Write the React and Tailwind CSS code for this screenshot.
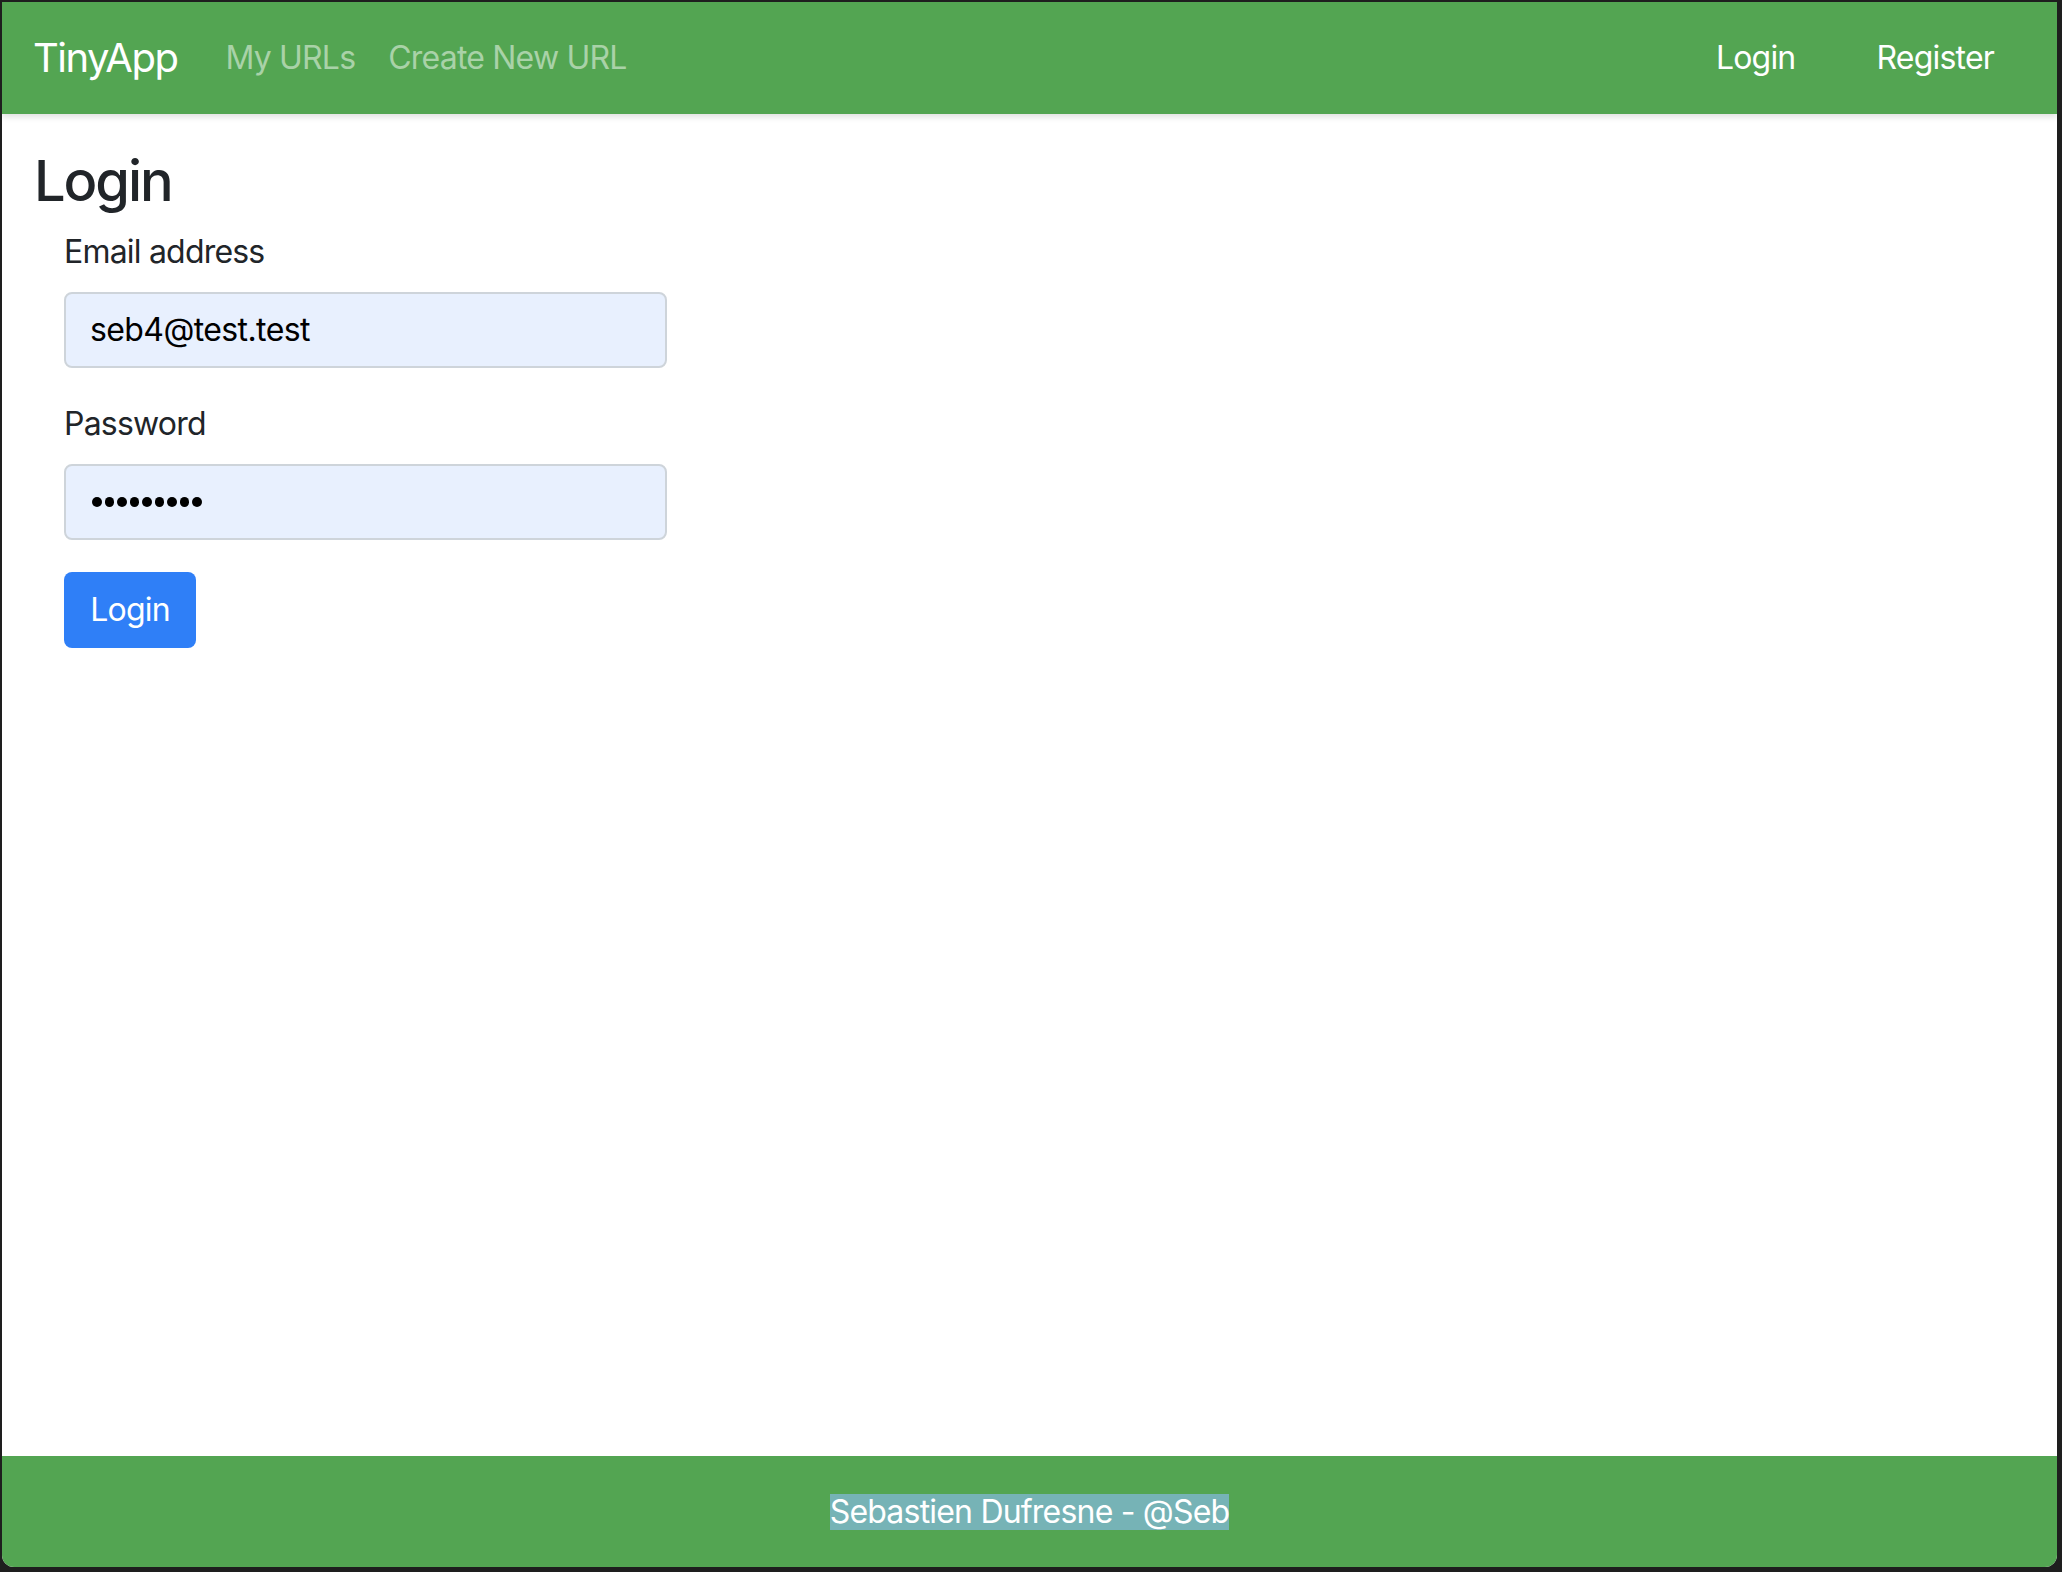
import React from "react";

const font = { fontFamily: 'Inter, "Noto Sans", "Liberation Sans", sans-serif' };

function Dots() {
  return (
    <div className="flex items-center gap-[3px]">
      {[0, 1, 2, 3, 4, 5, 6, 7, 8].map((i) => (
        <span key={i} className="block w-[9.5px] h-[9.5px] rounded-full bg-black" />
      ))}
    </div>
  );
}

export default function App() {
  return (
    <div
      className="w-[2062px] h-[1572px] bg-[#1e1e1e] pt-[2px] pl-[2px] pr-[5px] pb-[5px] overflow-hidden"
      style={font}
    >
      <div className="w-full h-full flex flex-col bg-white rounded-b-[12px] overflow-hidden">
        {/* Navbar */}
        <nav className="relative z-10 h-[112px] shrink-0 bg-[#53a552] flex items-center pl-[31px] pr-[63px] shadow-[0_3px_6px_rgba(0,0,0,0.12)]">
          <span className="text-[40px] text-white tracking-[-1.5px]">TinyApp</span>
          <span className="ml-[48px] text-[32px] text-[#a9d2a8] tracking-[-0.8px]">My URLs</span>
          <span className="ml-[33px] text-[32px] text-[#a9d2a8] tracking-[-0.8px]">Create New URL</span>
          <div className="ml-auto flex items-center">
            <span className="text-[32px] text-white tracking-[-0.8px]">Login</span>
            <span className="ml-[81px] text-[32px] text-white tracking-[-0.8px]">Register</span>
          </div>
        </nav>

        {/* Main */}
        <main className="flex-1 pt-[34px] pl-[32px]">
          <h3 className="text-[56px] leading-[1.2] font-medium text-[#212529] mb-[13px] tracking-[-2.1px]">Login</h3>
          <form className="ml-[30px] w-[603px]">
            <div className="mb-[32px]">
              <label className="block text-[32px] leading-[48px] text-[#212529] mb-[16px] tracking-[-0.8px]">Email address</label>
              <div className="h-[76px] rounded-[8px] border-2 border-[#ced4da] bg-[#e8f0fe] px-[24px] flex items-center text-[32px] text-black tracking-[-0.6px]">
                seb4@test.test
              </div>
            </div>
            <div className="mb-[32px]">
              <label className="block text-[32px] leading-[48px] text-[#212529] mb-[16px] tracking-[-0.8px]">Password</label>
              <div className="h-[76px] rounded-[8px] border-2 border-[#ced4da] bg-[#e8f0fe] pl-[26px] pr-[24px] flex items-center">
                <Dots />
              </div>
            </div>
            <button
              type="button"
              className="h-[76px] w-[132px] rounded-[8px] bg-[#2f7ff7] text-white text-[32px] tracking-[-0.8px] flex items-center justify-center"
            >
              Login
            </button>
          </form>
        </main>

        {/* Footer */}
        <footer className="h-[111px] shrink-0 bg-[#53a552] flex items-center justify-center">
          <span className="bg-[#76b3b6] text-white text-[32px] leading-[36px] tracking-[-0.8px]">
            Sebastien Dufresne - @Seb
          </span>
        </footer>
      </div>
    </div>
  );
}
